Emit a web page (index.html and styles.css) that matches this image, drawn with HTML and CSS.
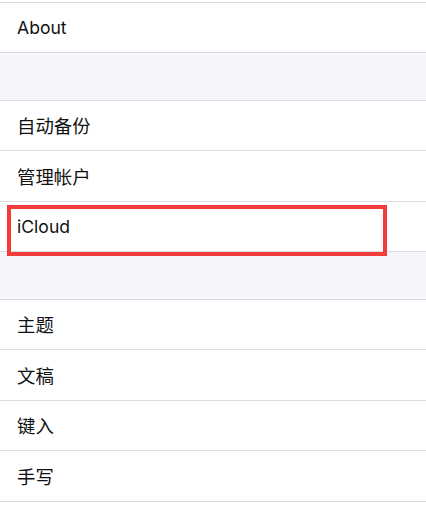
FILE: index.html
```html
<!DOCTYPE html>
<html lang="zh-CN">
<head>
<meta charset="utf-8">
<link rel="stylesheet" href="styles.css">
</head>
<body>
<div class="page">
  <div class="group">
    <div class="row">About</div>
  </div>
  <div class="gap"></div>
  <div class="group">
    <div class="row cjk">自动备份</div>
    <div class="row cjk">管理帐户</div>
    <div class="row">iCloud<span class="mark"></span></div>
  </div>
  <div class="gap"></div>
  <div class="group">
    <div class="row cjk">主题</div>
    <div class="row cjk">文稿</div>
    <div class="row cjk">键入</div>
    <div class="row cjk">手写</div>
  </div>
</div>
</body>
</html>
```
FILE: styles.css
```css
html, body {
  margin: 0;
  padding: 0;
  background: #ffffff;
}
.page {
  padding-top: 1.5px;
  font-family: Inter, "Noto Sans CJK SC", sans-serif;
  color: #111111;
}
.group {
  background: #ffffff;
  border-top: 1px solid #d8dadf;
  border-bottom: 1px solid #d8dadf;
}
.row {
  height: 49.5px;
  display: flex;
  align-items: center;
  padding-left: 17px;
  font-size: 17.6px;
  border-top: 1px solid #dcdde1;
  position: relative;
}
.row.cjk {
  font-size: 18.4px;
}
.row:first-child {
  border-top: none;
}
.gap {
  height: 46.5px;
  background: #f5f6fa;
}
.mark {
  position: absolute;
  left: 7px;
  top: 3px;
  width: 372px;
  height: 43px;
  border: 4px solid #f23b3b;
}
```
